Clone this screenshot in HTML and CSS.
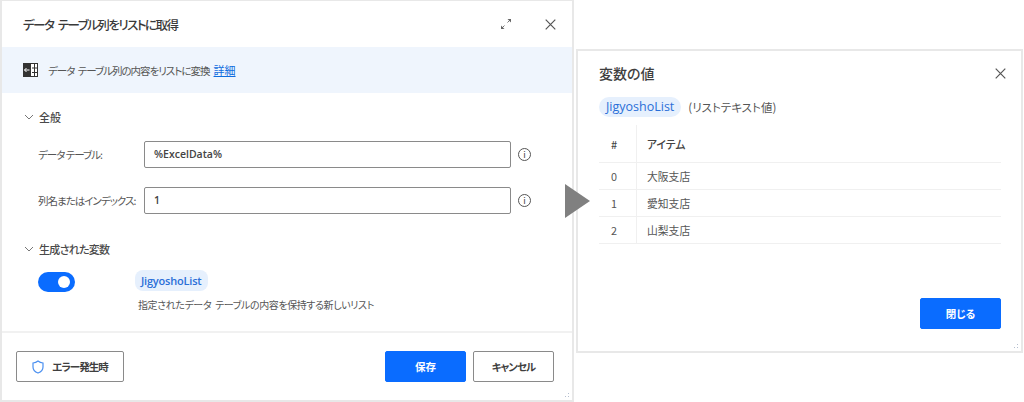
FILE: index.html
```html
<!DOCTYPE html>
<html lang="ja">
    <head>
        <title>データ テーブル列をリストに取得</title>
        <link rel="stylesheet" href="styles.css">
    </head>
    <body>
        <div class="page">
            <div class="dialog">
                <div class="dialog-head">
                    <h1>データ テーブル列をリストに取得</h1>
                    <svg class="expand" width="10" height="10" viewBox="0 0 10 10">
                        <path d="M1 9 3.500 6.500M6.500 3.500 9 1" stroke="#777" stroke-width="1" fill="none"/>
                        <path d="M0 6.500V10h3.500zM10 3.500V0H6.500z" fill="#666"/>
                    </svg>
                    <svg class="close" width="11" height="11" viewBox="0 0 11 11">
                        <path d="M.7.7l9.6 9.6M10.300.7.7 10.300" stroke="#555" stroke-width="1.200" fill="none"/>
                    </svg>
                </div>
                <div class="banner">
                    <svg width="15" height="14" viewBox="0 0 15 14">
                        <rect x="0.500" y="0.500" width="14" height="13" fill="#fff" stroke="#333"/>
                        <rect x="0" y="0" width="8" height="14" fill="#333"/>
                        <path d="M9 5h6M9 9.500h6M11.500 0v14" stroke="#333" fill="none"/>
                        <path d="M1.500 7h5M3.500 5 1.500 7l2 2" stroke="#fff" fill="none"/>
                    </svg>
                    <span>データ テーブル列の内容をリストに変換</span>
                    <a href="#">詳細</a>
                </div>
                <div class="body">
                    <div class="section-title first">
                        <svg width="10" height="6" viewBox="0 0 10 6"><path d="M1 1l4 4 4-4" stroke="#777" fill="none"/></svg>
                        全般
                    </div>
                    <div class="field">
                        <label>データ テーブル:</label>
                        <div class="input">%ExcelData%</div>
                        <span class="info">i</span>
                    </div>
                    <div class="field">
                        <label>列名またはインデックス:</label>
                        <div class="input">1</div>
                        <span class="info">i</span>
                    </div>
                    <div class="section-title second">
                        <svg width="10" height="6" viewBox="0 0 10 6"><path d="M1 1l4 4 4-4" stroke="#777" fill="none"/></svg>
                        <span class="tight">生成された変数</span>
                    </div>
                    <div class="output">
                        <div class="toggle"><span></span></div>
                        <div class="output-text">
                            <span class="chip">JigyoshoList</span>
                            <p>指定されたデータ テーブルの内容を保持する新しいリスト</p>
                        </div>
                    </div>
                </div>
                <div class="dialog-foot">
                    <button class="btn error-btn">
                        <svg width="12" height="14" viewBox="0 0 12 14"><path d="M6 1c1.500 1.200 3 1.800 5 2v4c0 3-2 5-5 6-3-1-5-3-5-6V3c2-.2 3.500-.8 5-2z" stroke="#4a8ff0" stroke-width="1.200" fill="none"/></svg>
                        エラー発生時
                    </button>
                    <span class="spacer"></span>
                    <button class="btn primary">保存</button>
                    <button class="btn">キャンセル</button>
                </div>
                <div class="grip"></div>
            </div>

            <div class="dialog values">
                <div class="values-head">
                    <h2>変数の値</h2>
                    <svg width="11" height="11" viewBox="0 0 11 11">
                        <path d="M.7.7l9.600 9.600M10.300.7.7 10.300" stroke="#555" stroke-width="1.200" fill="none"/>
                    </svg>
                </div>
                <div class="values-name">
                    <span class="chip">JigyoshoList</span>
                    <span>(リストテキスト値)</span>
                </div>
                <table>
                    <tr><th class="num">#</th><th>アイテム</th></tr>
                    <tr><td class="num">0</td><td>大阪支店</td></tr>
                    <tr><td class="num">1</td><td>愛知支店</td></tr>
                    <tr><td class="num">2</td><td>山梨支店</td></tr>
                </table>
                <div class="values-foot">
                    <button class="btn primary">閉じる</button>
                </div>
                <div class="grip"></div>
            </div>
            <div class="arrow"></div>
        </div>
    </body>
</html>
```

FILE: styles.css
```css
body {
  margin: 0;
  font-family: "Noto Sans CJK JP", "Noto Sans", sans-serif;
  font-feature-settings: "palt";
  color: #444;
  background: #fff;
}
.page {
  position: relative;
  display: flex;
  align-items: flex-start;
  height: 402px;
  padding-right: 1px;
  box-sizing: border-box;
  overflow: hidden;
}
.dialog {
  position: relative;
  display: flex;
  flex-direction: column;
  flex: none;
  box-sizing: border-box;
  width: 574px;
  height: 402px;
  border: 1px solid #e8e8e8;
  border-width: 1px 2px 2px 2px;
  background: #fff;
}
.dialog-head {
  display: flex;
  align-items: center;
  height: 46px;
  padding: 0 16px 0 21px;
  flex: none;
}
h1 {
  margin: 0;
  flex: 1;
  font-size: 12.500px;
  font-weight: 500;
  letter-spacing: -1.500px;
  word-spacing: 3px;
  color: #3a3a3a;
}
.expand {
  margin-right: 34px;
}
.banner {
  display: flex;
  align-items: center;
  height: 46px;
  flex: none;
  padding-left: 21px;
  background: #eff5fd;
  font-size: 10.500px;
  letter-spacing: -1px;
  word-spacing: 2px;
  color: #555;
}
.banner svg {
  margin-right: 10px;
}
.banner a {
  margin-left: 4px;
  font-size: 11px;
  letter-spacing: 0;
  color: #0f6cde;
}
.body {
  flex: 1;
  padding-left: 22px;
}
.section-title {
  display: flex;
  align-items: center;
  gap: 5px;
  font-size: 11px;
  font-weight: 500;
  color: #4a4a4a;
  height: 16px;
}
.section-title.first {
  margin-top: 16px;
}
.section-title.second {
  margin-top: 27px;
}
.tight {
  letter-spacing: -0.700px;
}
.field {
  display: flex;
  align-items: center;
  height: 27px;
  font-size: 11px;
}
.section-title.first + .field {
  margin-top: 16px;
}
.field + .field {
  margin-top: 19px;
}
.field label {
  width: 106px;
  margin-left: 14px;
  flex: none;
  font-size: 10.500px;
  letter-spacing: -1px;
  color: #555;
  white-space: nowrap;
}
.input {
  box-sizing: border-box;
  width: 367px;
  height: 27px;
  padding-left: 9px;
  border: 1px solid #8a8a8a;
  border-radius: 2px;
  line-height: 25px;
  color: #444;
  font-family: "Open Sans", "Noto Sans", sans-serif;
  font-weight: 600;
  font-size: 10.500px;
}
.info {
  box-sizing: border-box;
  width: 13px;
  height: 13px;
  margin-left: 7px;
  border: 1px solid #555;
  border-radius: 50%;
  text-align: center;
  line-height: 11px;
  font-size: 9px;
  color: #444;
}
.output {
  display: flex;
  margin-top: 12px;
}
.toggle {
  box-sizing: border-box;
  width: 37px;
  height: 20px;
  margin: 3px 0 0 14px;
  padding: 4px 5px;
  display: flex;
  justify-content: flex-end;
  border-radius: 10px;
  background: #0a6cff;
}
.toggle span {
  width: 12px;
  height: 12px;
  border-radius: 50%;
  background: #fff;
}
.output-text {
  margin-left: 60px;
}
.output-text .chip {
  display: block;
  width: fit-content;
  margin-top: 1px;
  padding-right: 7px;
  letter-spacing: -0.200px;
}
.output-text p {
  margin: 6px 0 0 3px;
  font-size: 10px;
  letter-spacing: -0.400px;
  word-spacing: 2px;
  color: #555;
  white-space: nowrap;
}
.chip {
  display: inline-block;
  padding: 0 6px;
  height: 21px;
  line-height: 21px;
  border-radius: 8px;
  background: #e6f0fd;
  color: #2a6fd8;
  font-family: "Open Sans", "Noto Sans", sans-serif;
  font-size: 11px;
  font-weight: 600;
}
.dialog-foot {
  display: flex;
  align-items: center;
  gap: 7px;
  flex: none;
  height: 69px;
  padding: 0 18px 0 14px;
  box-sizing: border-box;
  border-top: 2px solid #f1f1f1;
}
.spacer {
  flex: 1;
}
.btn {
  box-sizing: border-box;
  width: 81px;
  height: 31px;
  border: 1px solid #8a8a8a;
  border-radius: 2px;
  background: #fff;
  color: #3f3f3f;
  font-family: inherit;
  font-feature-settings: inherit;
  font-size: 10.500px;
  font-weight: 700;
  letter-spacing: -1px;
  padding: 0;
}
.btn.primary {
  border-color: #0a6cff;
  background: #0a6cff;
  color: #fff;
  letter-spacing: 0;
}
.error-btn {
  display: flex;
  align-items: center;
  justify-content: center;
  gap: 8px;
  width: 108px;
}
.grip {
  position: absolute;
  right: 1px;
  bottom: 1px;
  width: 10px;
  height: 10px;
  background: radial-gradient(#b5bfd0 1px, transparent 1px) 0 0 / 3px 3px;
  clip-path: polygon(100% 0, 100% 100%, 0 100%);
}
.values {
  width: 447px;
  height: 304px;
  margin: 49px 0 0 2px;
  padding: 0 20px 0 21px;
  border-width: 2px;
}
.values-head {
  display: flex;
  align-items: center;
  justify-content: space-between;
  height: 44px;
  margin-bottom: 2px;
}
h2 {
  margin: 0;
  font-size: 14px;
  font-weight: 500;
  color: #3f3f3f;
}
.values-head svg {
  margin-right: -5px;
}
.values-name {
  display: flex;
  align-items: center;
  gap: 7px;
  font-size: 11.500px;
  color: #555;
}
.values-name .chip {
  height: 20px;
  line-height: 20px;
  border-radius: 10px;
  padding: 0 7px;
  font-size: 12.500px;
  font-weight: 400;
}
table {
  width: 100%;
  margin-top: 8px;
  border-collapse: collapse;
  font-size: 10.800px;
  color: #555;
}
th, td {
  padding: 0 0 0 10px;
  text-align: left;
  border-bottom: 1px solid #f0f0f0;
}
th {
  height: 37px;
  font-weight: 500;
  color: #444;
}
td {
  height: 26px;
}
.num {
  width: 25px;
  padding-left: 12px;
  border-right: 1px solid #f0f0f0;
}
.values-foot {
  display: flex;
  justify-content: flex-end;
  margin-top: 54px;
}
.arrow {
  position: absolute;
  left: 565px;
  top: 184px;
  width: 0;
  height: 0;
  border-left: 25px solid #808080;
  border-top: 17px solid transparent;
  border-bottom: 17px solid transparent;
}
```
